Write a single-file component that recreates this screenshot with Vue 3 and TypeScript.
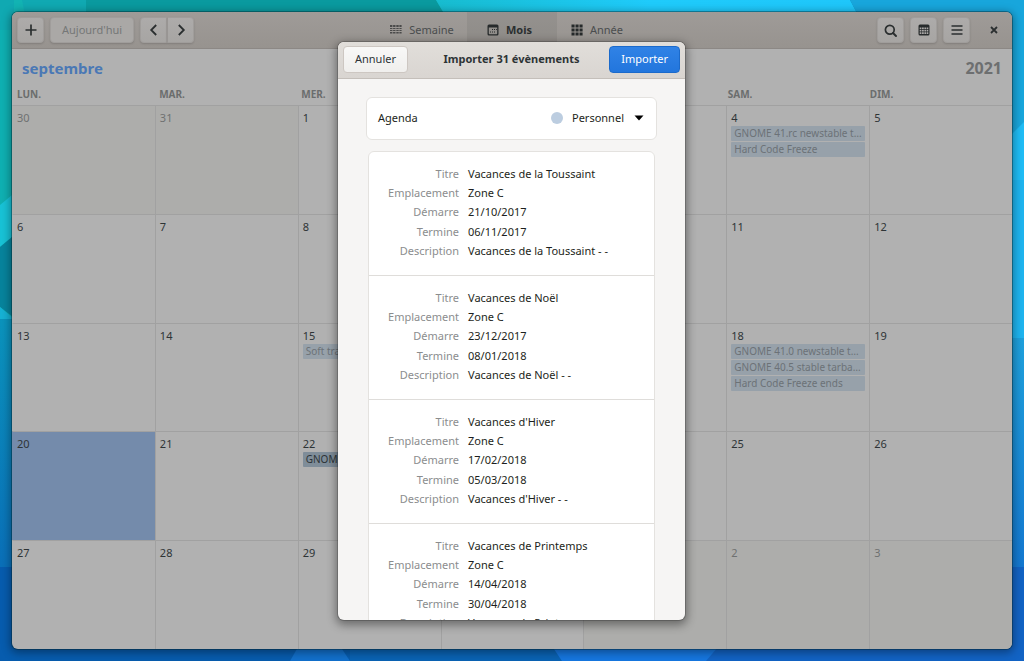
<script setup lang="ts">
import { ref } from 'vue'

interface CalendarEvent {
  title: string
  upcoming?: boolean
}

interface Day {
  num: number
  outside: boolean
  selected: boolean
  events: CalendarEvent[]
}

interface ImportedEvent {
  titre: string
  emplacement: string
  demarre: string
  termine: string
  description: string
}

const weekdays = ['LUN.', 'MAR.', 'MER.', 'JEU.', 'VEN.', 'SAM.', 'DIM.']

const eventsByDay: Record<number, CalendarEvent[]> = {
  4: [{ title: 'GNOME 41.rc newstable tarballs due' }, { title: 'Hard Code Freeze' }],
  15: [{ title: 'Soft translation deadline' }],
  18: [
    { title: 'GNOME 41.0 newstable tarballs due' },
    { title: 'GNOME 40.5 stable tarballs due' },
    { title: 'Hard Code Freeze ends' },
  ],
  22: [{ title: 'GNOME 41.0 newstable release', upcoming: true }],
}

const weeks: Day[][] = Array.from({ length: 5 }, (_, w) =>
  Array.from({ length: 7 }, (_, d) => {
    const n = w * 7 + d - 1
    const outside = n < 1 || n > 30
    const num = n < 1 ? 31 + n : n > 30 ? n - 30 : n
    return { num, outside, selected: n === 20, events: outside ? [] : eventsByDay[n] ?? [] }
  }),
)

const imported: ImportedEvent[] = [
  { titre: 'Vacances de la Toussaint', emplacement: 'Zone C', demarre: '21/10/2017', termine: '06/11/2017', description: 'Vacances de la Toussaint - -' },
  { titre: 'Vacances de Noël', emplacement: 'Zone C', demarre: '23/12/2017', termine: '08/01/2018', description: 'Vacances de Noël - -' },
  { titre: "Vacances d'Hiver", emplacement: 'Zone C', demarre: '17/02/2018', termine: '05/03/2018', description: "Vacances d'Hiver - -" },
  { titre: 'Vacances de Printemps', emplacement: 'Zone C', demarre: '14/04/2018', termine: '30/04/2018', description: 'Vacances de Printemps - -' },
]

const agenda = ref('Personnel')
</script>

<template>
  <div class="desktop">
    <svg class="wallpaper" viewBox="0 0 1024 661" preserveAspectRatio="none" aria-hidden="true">
      <defs>
        <linearGradient id="leftFade" x1="0" y1="0" x2="0" y2="1">
          <stop offset="0" stop-color="#0b93bc" />
          <stop offset="1" stop-color="#0a6fb8" />
        </linearGradient>
        <linearGradient id="rightFade" x1="0" y1="0" x2="0" y2="1">
          <stop offset="0" stop-color="#1fa0dc" />
          <stop offset="1" stop-color="#1478d0" />
        </linearGradient>
        <linearGradient id="topFade" x1="0" y1="0" x2="1" y2="0">
          <stop offset="0" stop-color="#17bccf" />
          <stop offset="0.5" stop-color="#1fcbfb" />
          <stop offset="1" stop-color="#1fc6fa" />
        </linearGradient>
      </defs>
      <rect width="1024" height="661" fill="#0b93bc" />
      <rect width="512" height="320" fill="#0fb0b2" />
      <polygon points="0,0 86,0 86,30 0,30" fill="#10a9b2" />
      <polygon points="14,0 22,0 28,30 14,30" fill="#12b3b3" />
      <polygon points="86,0 436,0 454,30 86,30" fill="#0a9a9f" />
      <polygon points="436,0 850,0 866,30 454,30" fill="url(#topFade)" />
      <polygon points="850,0 1024,0 1024,180 980,180 980,30 866,30" fill="#18a6dc" />
      <polygon points="0,205 30,180 30,222 0,247" fill="#18c2d6" />
      <polygon points="0,247 30,222 30,330 0,307" fill="#07839c" />
      <polygon points="0,307 14,319 0,319" fill="#16b1d4" />
      <rect y="319" width="40" height="250" fill="url(#leftFade)" />
      <rect y="567" width="512" height="94" fill="#075cae" />
      <polygon points="1024,122 1000,146 1000,190 1024,190" fill="#20bdf6" />
      <rect x="1000" y="180" width="24" height="170" fill="#1fb4ef" />
      <rect x="1000" y="338" width="24" height="230" fill="url(#rightFade)" />
      <rect x="512" y="567" width="512" height="94" fill="#1263c4" />
      <polygon points="302,640 336,640 350,661 290,661" fill="#1270cc" />
      <polygon points="350,640 548,640 562,661 350,661" fill="#0a63b4" />
      <polygon points="548,640 724,640 706,661 562,661" fill="#1677e0" />
    </svg>

    <main class="window">
      <header class="bar">
        <div class="bar-side">
          <button class="btn icon" aria-label="Nouvel évènement">
            <svg width="12" height="12" viewBox="0 0 12 12"><path d="M6 .5v11M.5 6h11" stroke="#2b2f30" stroke-width="1.7" /></svg>
          </button>
          <button class="btn today" disabled>Aujourd'hui</button>
          <div class="linked">
            <button class="btn icon" aria-label="Précédent">
              <svg width="12" height="12" viewBox="0 0 12 12"><path d="M8.2 1 3.2 6l5 5" fill="none" stroke="#2b2f30" stroke-width="1.8" /></svg>
            </button>
            <button class="btn icon" aria-label="Suivant">
              <svg width="12" height="12" viewBox="0 0 12 12"><path d="m3.8 1 5 5-5 5" fill="none" stroke="#2b2f30" stroke-width="1.8" /></svg>
            </button>
          </div>
        </div>
        <nav class="views">
          <button class="view">
            <svg width="12" height="12" viewBox="0 0 12 12" fill="#4a4a4a">
              <path d="M0 1h2.4v2H0zM3.1 1h2.4v2H3.1zM6.3 1h2.4v2H6.3zM9.4 1h2.2v2H9.4zM0 4h2.4v1H0zM3.1 4h2.4v1H3.1zM6.3 4h2.4v1H6.3zM9.4 4h2.2v1H9.4zM0 6h2.4v1H0zM3.1 6h2.4v1H3.1zM6.3 6h2.4v1H6.3zM9.4 6h2.2v1H9.4zM0 8h2.4v1.6H0zM3.1 8h2.4v1.6H3.1zM6.3 8h2.4v1.6H6.3zM9.4 8h2.2v1.6H9.4z" />
            </svg>
            Semaine
          </button>
          <button class="view active">
            <svg width="12" height="12" viewBox="0 0 12 12">
              <path fill-rule="evenodd" fill="#262a2b" d="M2 .5h8A1.5 1.5 0 0 1 11.5 2v8a1.5 1.5 0 0 1-1.5 1.5H2A1.5 1.5 0 0 1 .5 10V2A1.5 1.5 0 0 1 2 .5zM1.8 3.6v5.9c0 .4.2.7.6.7h7.2c.4 0 .6-.3.6-.7V3.6z" />
              <path fill="#262a2b" d="M5 5h1v1H5zM7 5h1v1H7zM9 5h.8v1H9zM3 7.500h1v1H3zM5 7.500h1v1H5zM7 7.500h1v1H7z" />
            </svg>
            Mois
          </button>
          <button class="view year">
            <svg width="12" height="12" viewBox="0 0 12 12" fill="#262a2b">
              <path d="M.5.5h3.1v3.1H.5zM4.5.5h3.1v3.1H4.5zM8.5.5h3.1v3.1H8.5zM.5 4.5h3.1v3.1H.5zM4.5 4.5h3.1v3.1H4.5zM8.5 4.5h3.1v3.1H8.5zM.5 8.5h3.1v3.1H.5zM4.5 8.5h3.1v3.1H4.5zM8.5 8.5h3.1v3.1H8.5z" />
            </svg>
            Année
          </button>
        </nav>
        <div class="bar-side end">
          <button class="btn icon" aria-label="Rechercher">
            <svg width="13" height="13" viewBox="0 0 13 13"><circle cx="5.8" cy="5.8" r="4.4" fill="none" stroke="#2b2f30" stroke-width="1.7" /><path d="m9 9 3 3" stroke="#2b2f30" stroke-width="1.9" stroke-linecap="round" /></svg>
          </button>
          <button class="btn icon" aria-label="Agendas">
            <svg width="12" height="12" viewBox="0 0 12 12">
              <path fill="#262a2b" d="M2 .5h8A1.5 1.5 0 0 1 11.5 2v8a1.5 1.5 0 0 1-1.5 1.5H2A1.5 1.5 0 0 1 .5 10V2A1.5 1.5 0 0 1 2 .5z" />
              <path fill="#aaa8a7" d="M1.7 3.5h1.7v1.7H1.7zM4 3.5h1.8v1.7H4zM6.4 3.5h1.7v1.7H6.4zM8.7 3.5h1.6v1.7H8.7zM1.7 5.9h1.7v1.7H1.7zM4 5.9h1.8v1.7H4zM6.4 5.9h1.7v1.7H6.4zM8.7 5.9h1.6v1.7H8.7zM1.7 8.3h1.7V10H1.7zM4 8.3h1.8V10H4zM6.4 8.3h1.7V10H6.4zM8.7 8.3h1.6V10H8.7z" />
            </svg>
          </button>
          <button class="btn icon" aria-label="Menu">
            <svg width="12" height="12" viewBox="0 0 12 12"><path d="M.5 2h11M.5 6h11M.5 10h11" stroke="#2b2f30" stroke-width="1.5" /></svg>
          </button>
          <button class="close" aria-label="Fermer">
            <svg width="8" height="8" viewBox="0 0 8 8"><path d="m1 1 6 6M7 1 1 7" stroke="#2b2f30" stroke-width="1.8" /></svg>
          </button>
        </div>
      </header>

      <div class="title">
        <h1>septembre</h1>
        <span class="year-label">2021</span>
      </div>

      <table class="month">
        <thead>
          <tr>
            <th v-for="d in weekdays" :key="d" scope="col">{{ d }}</th>
          </tr>
        </thead>
        <tbody>
          <tr v-for="(week, i) in weeks" :key="i">
            <td v-for="day in week" :key="day.num" :class="{ outside: day.outside, selected: day.selected }">
              <span class="num">{{ day.num }}</span>
              <div v-for="ev in day.events" :key="ev.title" class="event" :class="{ upcoming: ev.upcoming }">{{ ev.title }}</div>
            </td>
          </tr>
        </tbody>
      </table>
    </main>

    <div class="overlay">
      <section class="dialog" role="dialog" aria-labelledby="dialog-title">
        <header class="dialog-bar">
          <button class="dbtn">Annuler</button>
          <h2 id="dialog-title">Importer 31 évènements</h2>
          <button class="dbtn primary">Importer</button>
        </header>
        <div class="dialog-body">
          <div class="agenda">
            <label for="agenda">Agenda</label>
            <span class="dot"></span>
            <span class="picker">
              <select id="agenda" v-model="agenda">
                <option>Personnel</option>
              </select>
              <svg width="10" height="6" viewBox="0 0 10 6" aria-hidden="true"><path d="M.5.5h9L5 5.5z" fill="#000" /></svg>
            </span>
          </div>
          <ul class="list">
            <li v-for="ev in imported" :key="ev.titre">
              <dl>
                <dt>Titre</dt><dd>{{ ev.titre }}</dd>
                <dt>Emplacement</dt><dd>{{ ev.emplacement }}</dd>
                <dt>Démarre</dt><dd>{{ ev.demarre }}</dd>
                <dt>Termine</dt><dd>{{ ev.termine }}</dd>
                <dt>Description</dt><dd>{{ ev.description }}</dd>
              </dl>
            </li>
          </ul>
        </div>
      </section>
    </div>
  </div>
</template>

<style>
body {
  margin: 0;
}
</style>

<style scoped>
* {
  box-sizing: border-box;
}

.desktop {
  position: relative;
  display: flex;
  height: 100vh;
  padding: 12px;
  overflow: hidden;
  font-family: "Noto Sans", "Open Sans", sans-serif;
  font-size: 11px;
  line-height: 16px;
  color: #2e3436;
}

button,
select {
  font: inherit;
  color: inherit;
  margin: 0;
}

svg {
  display: block;
  flex: none;
}

.wallpaper {
  position: absolute;
  inset: 0;
  width: 100%;
  height: 100%;
}

.window {
  position: relative;
  flex: 1;
  min-width: 0;
  display: flex;
  flex-direction: column;
  border-radius: 6px;
  overflow: hidden;
  background: #b1b1b1;
  box-shadow: 0 0 0 1px rgba(0, 40, 50, 0.4), 0 2px 8px 2px rgba(0, 0, 0, 0.35);
}

.bar {
  display: grid;
  grid-template-columns: 1fr auto 1fr;
  height: 37px;
  background: linear-gradient(#9f9b98, #97938f);
  border-bottom: 1px solid #8c8885;
}

.bar-side {
  display: flex;
  align-items: center;
  gap: 6px;
  padding: 0 5px;
}

.bar-side.end {
  justify-content: flex-end;
}

.btn {
  height: 26px;
  padding: 0;
  border: 1px solid #a09d9b;
  border-radius: 4px;
  background: linear-gradient(#adabaa, #a7a5a3);
  box-shadow: 0 1px 2px rgba(0, 0, 0, 0.15);
  display: flex;
  align-items: center;
  justify-content: center;
}

.icon {
  width: 27px;
}

.today {
  padding: 0 11px;
  background: #aaa8a6;
  color: #757777;
}

.linked {
  display: flex;
}

.linked .btn:first-child {
  border-radius: 4px 0 0 4px;
}

.linked .btn:last-child {
  border-radius: 0 4px 4px 0;
  border-left-color: #989593;
}

.close {
  width: 26px;
  height: 26px;
  margin-left: 5px;
  padding: 0;
  border: 0;
  background: none;
  display: flex;
  align-items: center;
  justify-content: center;
}

.views {
  display: flex;
}

.view {
  width: 90px;
  padding: 0;
  border: 0;
  background: none;
  display: flex;
  align-items: center;
  justify-content: center;
  gap: 7px;
  color: #4a4d4e;
}

.view.active {
  padding-right: 5px;
  background: rgba(0, 0, 0, 0.06);
  font-weight: 700;
  color: #2b2f30;
}

.view.year {
  justify-content: flex-start;
  padding-left: 14px;
}

.title {
  display: flex;
  align-items: center;
  justify-content: space-between;
  height: 38px;
  padding: 0 10px;
  font-size: 15px;
  font-weight: 700;
}

h1 {
  margin: 0;
  font-size: inherit;
  color: #4a78b5;
}

.year-label {
  font-size: 16px;
  color: #6d6f70;
}

.month {
  flex: 1;
  display: flex;
  flex-direction: column;
  min-height: 0;
}

.month tr {
  display: grid;
  grid-template-columns: repeat(7, minmax(0, 1fr));
}

.month thead tr {
  height: 18px;
  padding: 0 0 0 5px;
}

.month th {
  padding: 0;
  text-align: left;
  font-size: 10px;
  line-height: 14px;
  color: #6b6d6d;
}

.month tbody {
  flex: 1;
  display: grid;
  grid-auto-rows: minmax(0, 1fr);
}

.month td {
  padding: 4px 4px 0;
  border-top: 1px solid #a1a1a1;
  border-left: 1px solid #a1a1a1;
}

.month td:first-child {
  border-left-color: transparent;
}

.month td.outside {
  background: #adadab;
  color: #6f7171;
}

.month td.selected {
  background: #748bab;
}

.num {
  display: block;
}

.event {
  height: 15px;
  margin: 0 0 1px;
  padding: 0 3px;
  border-radius: 1px;
  background: #97a1aa;
  color: #6c7277;
  font-size: 10px;
  line-height: 14px;
  white-space: nowrap;
  overflow: hidden;
  text-overflow: ellipsis;
}

.event.upcoming {
  background: #7f8d99;
  color: #2d3336;
}

.overlay {
  position: absolute;
  inset: 42px 1px 41px 0;
  display: flex;
  justify-content: center;
}

.dialog {
  width: 347px;
  max-width: 100%;
  display: flex;
  flex-direction: column;
  border-radius: 6px;
  overflow: hidden;
  background: #f6f5f4;
  box-shadow: 0 0 0 1px rgba(0, 0, 0, 0.18), 0 3px 10px 2px rgba(0, 0, 0, 0.4);
}

.dialog-bar {
  flex: none;
  display: grid;
  grid-template-columns: 1fr auto 1fr;
  align-items: center;
  height: 37px;
  padding: 0 5px 2px;
  background: linear-gradient(#e1deda, #d9d5d1);
  border-bottom: 1px solid #c4bfba;
}

h2 {
  margin: 0;
  font-size: 11px;
  font-weight: 700;
  color: #2e3436;
}

.dbtn {
  justify-self: start;
  height: 27px;
  padding: 0 11px;
  border: 1px solid #cdc7c2;
  border-radius: 4px;
  background: linear-gradient(#f8f8f7, #f0efed);
}

.dbtn.primary {
  justify-self: end;
  border-color: #1b6acb;
  background: linear-gradient(#3082e6, #2276dd);
  color: #fff;
}

.dialog-body {
  flex: 1;
  min-height: 0;
  overflow: hidden;
  padding: 18px 28px 0;
}

.agenda {
  display: flex;
  align-items: center;
  height: 43px;
  padding: 0 12px 1px 11px;
  border: 1px solid #e4e2df;
  border-radius: 6px;
  background: #fff;
  color: #1d1f20;
}

.agenda label {
  flex: 1;
}

.dot {
  width: 12px;
  height: 12px;
  margin-right: 9px;
  border-radius: 50%;
  background: #bccde0;
}

.picker {
  display: flex;
  align-items: center;
  gap: 10px;
}

.picker select {
  padding: 0;
  border: 0;
  appearance: none;
  background: none;
}

.list {
  margin: 11px 2px 0;
  padding: 0;
  list-style: none;
  border: 1px solid #e4e2df;
  border-radius: 6px 6px 0 0;
  background: #fff;
}

.list li {
  min-height: 124px;
  padding: 12px 18px 14px;
  border-bottom: 1px solid #dfddda;
}

dl {
  display: grid;
  grid-template-columns: 72px 1fr;
  grid-auto-rows: 1fr;
  align-items: center;
  column-gap: 9px;
  min-height: 97px;
  margin: 0;
  color: #1d1f20;
}

dt {
  display: flex;
  justify-content: flex-end;
  color: #8b8d8e;
}

dd {
  margin: 0;
}
</style>
